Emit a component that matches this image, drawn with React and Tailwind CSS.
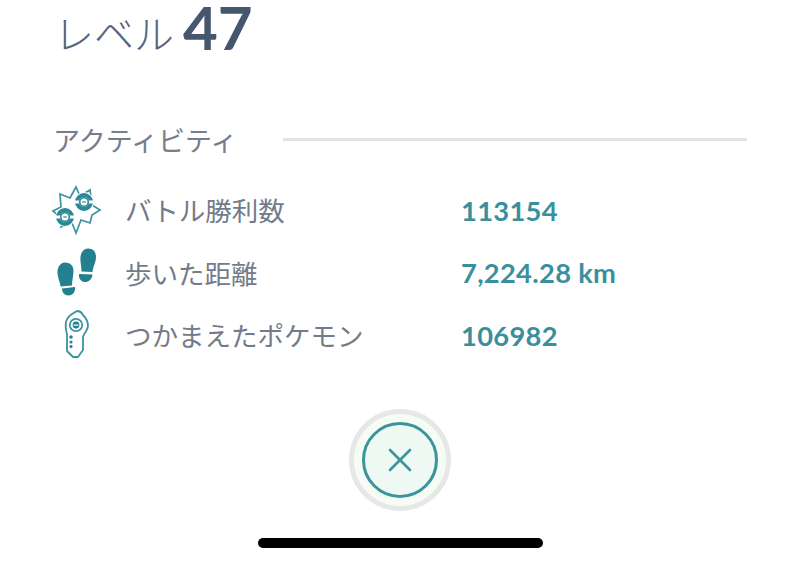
const jp = { fontFamily: '"Noto Sans CJK JP", sans-serif' };

function Ball({ cx, cy }) {
  return (
    <g>
      <circle cx={cx} cy={cy} r="10" fill="#fff" />
      <circle cx={cx} cy={cy} r="7" fill="none" stroke="#2b8896" strokeWidth="4" />
      <path d={`M${cx - 8.500} ${cy + 0.500} a9 9 0 0 0 17 0 Z`} fill="#2b8896" />
      <rect x={cx - 10} y={cy - 1.500} width="20" height="3" fill="#fff" />
      <circle cx={cx} cy={cy} r="4.300" fill="#fff" stroke="#2b8896" strokeWidth="1.600" />
      <rect x={cx - 1.800} y={cy - 0.600} width="3.600" height="1.200" fill="#2b8896" />
    </g>
  );
}

function BattleIcon() {
  return (
    <svg width="52" height="52" viewBox="0 -1 52 52">
      <path d="M26 2 L30 11 L40 5 L42 20 L50 25 L42 30 L40 38 L31 35 L26 48 L22 38 L11 42 L13 35 L3 26 L11 22 L10 9 L20 13 Z" fill="#fff" stroke="#3c929f" strokeWidth="1.700" />
      <Ball cx="34" cy="17" />
      <Ball cx="15" cy="32" />
    </svg>
  );
}

function StepsIcon() {
  return (
    <svg width="52" height="55" viewBox="0 0 52 55" fill="#23808f">
      <path d="M15 17.500 C20.500 17.500 23.500 21 23.500 26 C23.500 31 22 35 22 40.500 L10.500 41.500 C10 36 7.500 33 7.500 27 C7.500 22 10.500 17.500 15 17.500 Z" />
      <path d="M12 43.500 L25 42 C25.500 46.500 23 50.500 18.500 50.500 C14.500 50.500 12 47.500 12 43.500 Z" />
      <path d="M38 3.500 C43.500 3.500 46 7 46 12 C46 18 43 21 42.500 27 L31.500 26.500 C31.500 21 30 17 30.500 12 C31 7 34 3.500 38 3.500 Z" />
      <path d="M29 29 L42.500 29.500 C42 34.500 38 37.500 34.500 37 C30.500 36.500 28.500 33 29 29 Z" />
    </svg>
  );
}

function DeviceIcon() {
  return (
    <svg width="52" height="54" viewBox="-5 0 52 54" fill="none" stroke="#3c929f" strokeWidth="1.800" strokeLinejoin="round">
      <path d="M17 6 L22 3 C25 3 27 5 28 7 C31 10 33 14 33 18 C33 22 29 25 28 29 V42 L23 49 H18 L12 43 V26 C10.500 22 10.500 16 11 14 C12 10 14 8 17 6 Z" />
      <circle cx="21" cy="17" r="6.200" />
      <circle cx="21" cy="17" r="3.400" fill="#23808f" stroke="none" />
      <rect x="18.500" y="16.500" width="5" height="1.200" fill="#fff" stroke="none" />
      <circle cx="16" cy="29" r="1.800" fill="#23808f" stroke="none" />
      <circle cx="16" cy="34" r="1.600" fill="#23808f" stroke="none" />
      <circle cx="16" cy="38.500" r="1.600" fill="#23808f" stroke="none" />
    </svg>
  );
}

function Row({ icon, label, value }) {
  return (
    <div className="flex items-center h-[62.5px]">
      <div className="w-[52px] ml-[-4px] shrink-0">{icon}</div>
      <div style={jp} className="w-[336px] ml-[23px] text-[26.500px] font-normal text-[#737b88] leading-none shrink-0">{label}</div>
      <div className="font-['Lato',sans-serif] font-bold text-[27.300px] tracking-[0.300px] text-[#3a8f9c] leading-none">{value}</div>
    </div>
  );
}

export default function App() {
  return (
    <div className="w-[800px] h-[564px] bg-white overflow-hidden flex flex-col pl-[54px]">
      <div className="flex items-start h-[44px] mt-[5px]">
        <span style={jp} className="text-[40px] font-light text-[#56657c] leading-none mt-[7px]">レベル</span>
        <span className="font-['Lato',sans-serif] font-bold text-[60px] text-[#46566f] leading-[44px] ml-[9px]">47</span>
      </div>
      <div className="flex items-center mt-[74px] h-[32px]">
        <span style={jp} className="w-[229px] text-[27px] font-normal text-[#767e8a] leading-none shrink-0 ml-[-1px] mr-[1px]">アクティビティ</span>
        <div className="w-[464px] h-[3px] bg-[#e2e3e5]" />
      </div>
      <div className="flex flex-col mt-[24px]">
        <Row icon={<BattleIcon />} label="バトル勝利数" value="113154" />
        <Row icon={<StepsIcon />} label="歩いた距離" value="7,224.28 km" />
        <Row icon={<DeviceIcon />} label="つかまえたポケモン" value="106982" />
      </div>
      <div className="ml-[295px] mt-[42.500px] w-[102px] h-[102px] shrink-0 rounded-full bg-[#f5fcf3] border-[5px] border-[#e6e7e6] flex items-center justify-center">
        <div className="w-[76px] h-[76px] rounded-full border-[3px] border-[#3c949b] bg-[#eff9f4] flex items-center justify-center">
          <svg width="26" height="26" viewBox="0 0 26 26" stroke="#3c949b" strokeWidth="2.600" strokeLinecap="round">
            <path d="M3 3 L23 23 M23 3 L3 23" />
          </svg>
        </div>
      </div>
      <div className="ml-[204px] mt-[27px] w-[285px] h-[10px] shrink-0 rounded-full bg-black" />
    </div>
  );
}
